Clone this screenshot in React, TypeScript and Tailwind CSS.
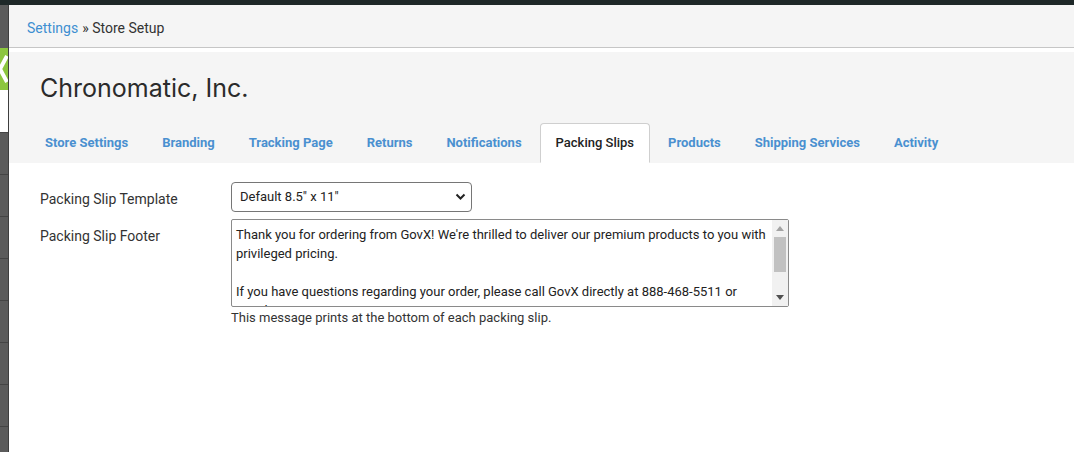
import React from 'react';

const tabs = [
  'Store Settings',
  'Branding',
  'Tracking Page',
  'Returns',
  'Notifications',
  'Packing Slips',
  'Products',
  'Shipping Services',
  'Activity',
];

const footerText =
  "Thank you for ordering from GovX! We're thrilled to deliver our premium products to you with privileged pricing.\n\nIf you have questions regarding your order, please call GovX directly at 888-468-5511 or email support@govx.com.\n\nThank you for your service!";

const SideStrip: React.FC = () => (
  <div className="w-[9px] shrink-0 flex flex-col bg-[#5b5b5b] border-r border-[#3e3e3e] overflow-hidden">
    <div className="h-[43px] shrink-0" />
    <div className="h-[42px] shrink-0 bg-[#8cc63f] flex items-center">
      <svg width="8" height="42" viewBox="0 0 8 42">
        <path d="M7 8 L0 21 L7 34" stroke="#fff" strokeWidth="4" fill="none" />
      </svg>
    </div>
    <div className="h-[43px] shrink-0 bg-white border-b border-[#444]" />
    {Array.from({ length: 8 }).map((_, i) => (
      <div key={i} className="h-[42px] shrink-0 border-b border-[#444]" />
    ))}
  </div>
);

// native-looking vertical scrollbar drawn over the textarea
const FakeScrollbar: React.FC = () => (
  <div className="absolute right-[1px] top-[1px] bottom-[1px] w-[16px] bg-[#f1f1f1] flex flex-col items-center">
    <div className="h-[17px] flex items-center justify-center">
      <svg width="8" height="5" viewBox="0 0 8 5">
        <path d="M0 5 L4 0 L8 5 Z" fill="#a3a3a3" />
      </svg>
    </div>
    <div className="w-[12px] h-[35px] bg-[#c1c1c1]" />
    <div className="flex-1" />
    <div className="h-[17px] flex items-center justify-center">
      <svg width="8" height="5" viewBox="0 0 8 5">
        <path d="M0 0 L8 0 L4 5 Z" fill="#505050" />
      </svg>
    </div>
  </div>
);

const App: React.FC = () => {
  return (
    <div className="w-[1074px] h-[452px] overflow-hidden bg-white font-['Roboto',sans-serif] text-[#333]">
      <div className="h-[5px] bg-[#1e2828]" />
      <div className="flex h-[447px]">
        <SideStrip />
        <div className="flex-1 flex flex-col">
          {/* Breadcrumb */}
          <div className="h-[43px] shrink-0 bg-[#f5f5f5] border-b border-[#c6c6c6] flex items-center pl-[18px] pt-[4px] text-[14px]">
            <a href="#" className="text-[#3d8fd1]">Settings</a>
            <span className="ml-[4px]">» Store Setup</span>
          </div>

          {/* Header */}
          <div className="mt-[4px] bg-[#f5f5f5] pt-[21px]">
            <h1 className="pl-[31px] text-[25px] leading-[30px] text-[#2b2b2b] font-['Inter',sans-serif] font-normal">
              Chronomatic, Inc.
            </h1>
            <nav className="flex pl-[20px] mt-[20px] items-end">
              {tabs.map((t) =>
                t === 'Packing Slips' ? (
                  <div
                    key={t}
                    className="mr-[2px] h-[40px] px-[15px] flex items-center bg-white border border-[#cfcfcf] border-b-white rounded-t-[4px] text-[13px] font-medium text-[#222]"
                  >
                    {t}
                  </div>
                ) : (
                  <a
                    key={t}
                    href="#"
                    className="mr-[2px] h-[40px] px-[15px] flex items-center border border-transparent text-[13px] font-bold text-[#4a90d0]"
                  >
                    {t}
                  </a>
                )
              )}
            </nav>
          </div>

          {/* Form */}
          <div className="pl-[31px] pt-[19px] text-[14px]">
            <div className="flex items-center">
              <label className="w-[191px] shrink-0 pt-[4px]">Packing Slip Template</label>
              <div className="relative w-[241px]">
                <select className="appearance-none w-full h-[30px] border border-[#767676] rounded-[4px] pl-[8px] text-[13px] text-[#222] bg-white">
                  <option>Default 8.5" x 11"</option>
                </select>
                <svg
                  className="absolute right-[6px] top-[11px] pointer-events-none"
                  width="11"
                  height="8"
                  viewBox="0 0 11 8"
                >
                  <path d="M1.5 1.5 L5.5 5.5 L9.5 1.5" stroke="#222" strokeWidth="2" fill="none" />
                </svg>
              </div>
            </div>
            <div className="flex mt-[7px]">
              <label className="w-[191px] shrink-0 pt-[7px]">Packing Slip Footer</label>
              <div className="flex flex-col">
                <div className="relative w-[558px] h-[88px]">
                  <textarea
                    defaultValue={footerText}
                    className="w-full h-full border border-[#8a8a8a] rounded-[2px] pl-[4px] pr-[20px] py-[5px] text-[13px] leading-[19px] text-[#222] resize-none overflow-hidden"
                  />
                  <FakeScrollbar />
                </div>
                <p className="text-[13px] mt-[1px] text-[#333]">
                  This message prints at the bottom of each packing slip.
                </p>
              </div>
            </div>
          </div>
        </div>
      </div>
    </div>
  );
};

export default App;
